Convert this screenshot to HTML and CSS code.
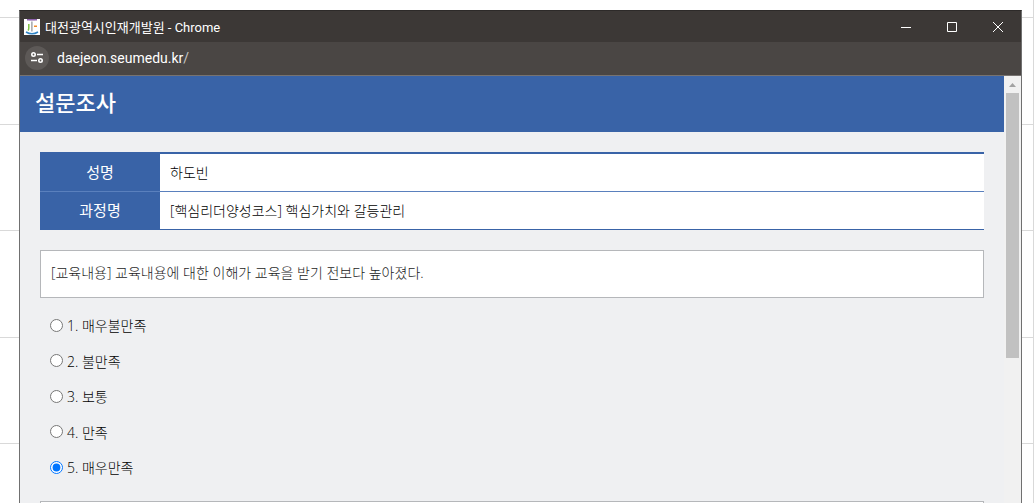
FILE: index.html
```html
<!DOCTYPE html>
<html lang="ko">
<head>
<meta charset="utf-8">
<title>설문조사</title>
<link rel="stylesheet" href="styles.css">
</head>
<body>
<div class="sheet" aria-hidden="true">
  <div class="sheet-top"></div>
  <div class="sheet-row"></div>
  <div class="sheet-row"></div>
  <div class="sheet-row"></div>
  <div class="sheet-row"></div>
  <div class="sheet-row"></div>
</div>
<div class="window">
  <div class="titlebar">
    <svg class="favicon" width="16" height="16" viewBox="0 0 16 16">
      <path fill="#fff" d="M0 0h16v16H0z"/>
      <path fill="#8e63ad" d="M3 0h10v1.5H3z"/>
      <path fill="#b79acb" d="M5 1.5h6V2H5z"/>
      <path fill="#8a8f96" d="M7.3 2.5h1.2v10H7.3z"/>
      <path d="M4.8 5v4q0 1.6-.8 2.5" fill="none" stroke="#7fc241" stroke-width="1.5"/>
      <path fill="#f08a2c" d="M10 6.5h3V8h-3z"/>
      <path d="M2 13q6 3.5 12 0" fill="none" stroke="#2f83c5" stroke-width="1.5"/>
    </svg>
    <span class="window-title">대전광역시인재개발원 - Chrome</span>
    <div class="controls">
      <button type="button" aria-label="최소화"><svg width="12" height="12" viewBox="0 0 12 12"><path d="M1 6.5h10"/></svg></button>
      <button type="button" aria-label="최대화"><svg width="12" height="12" viewBox="0 0 12 12"><path d="M1.5 1.5h9v9h-9z"/></svg></button>
      <button type="button" aria-label="닫기"><svg width="12" height="12" viewBox="0 0 12 12"><path d="M1 1l10 10M11 1L1 11"/></svg></button>
    </div>
  </div>
  <div class="addressbar">
    <button type="button" class="site-info" aria-label="사이트 정보 보기">
      <svg width="14" height="14" viewBox="0 0 14 14"><circle cx="3.5" cy="3.5" r="1.7"/><path d="M7 3.5h6M1 9.5h6"/><circle cx="10.5" cy="9.5" r="1.7"/></svg>
    </button>
    <span class="url">daejeon.seumedu.kr<span class="path">/</span></span>
  </div>
  <div class="viewport">
    <main class="page">
      <h1 class="page-title">설문조사</h1>
      <div class="content">
        <table class="info">
          <tr><th scope="row">성명</th><td>하도빈</td></tr>
          <tr><th scope="row">과정명</th><td>[핵심리더양성코스] 핵심가치와 갈등관리</td></tr>
        </table>
        <p class="question" id="q1">[교육내용] 교육내용에 대한 이해가 교육을 받기 전보다 높아졌다.</p>
        <div class="options" role="radiogroup" aria-labelledby="q1">
          <label class="option"><input type="radio" name="q1" value="1">1. 매우불만족</label>
          <label class="option"><input type="radio" name="q1" value="2">2. 불만족</label>
          <label class="option"><input type="radio" name="q1" value="3">3. 보통</label>
          <label class="option"><input type="radio" name="q1" value="4">4. 만족</label>
          <label class="option"><input type="radio" name="q1" value="5" checked>5. 매우만족</label>
        </div>
        <p class="question"></p>
      </div>
    </main>
    <div class="scrollbar" aria-hidden="true">
      <svg class="arrow" width="17" height="17" viewBox="0 0 17 17"><path d="M5 11l3.5-4 3.5 4z"/></svg>
      <div class="thumb"></div>
    </div>
  </div>
</div>
</body>
</html>
```

FILE: styles.css
```css
* { box-sizing: border-box; }

body {
  margin: 0;
  height: 100vh;
  overflow: hidden;
  display: flex;
  background: #fff;
  font-family: "Open Sans", "Noto Sans CJK KR", sans-serif;
  font-size: 14px;
  color: #000;
}

/* Spreadsheet grid behind the window */
.sheet {
  position: absolute;
  inset: 0;
  overflow: hidden;
  border-right: 1px solid #d9d9d9;
  margin-right: 1px;
}
.sheet-top { height: 18px; border-bottom: 1px solid #d9d9d9; }
.sheet-row { height: 107px; border-bottom: 1px solid #d9d9d9; }
.sheet-row:nth-child(odd) { height: 106px; }

.window {
  position: relative;
  flex: 1;
  display: flex;
  flex-direction: column;
  margin: 10px 13px 0 19px;
  border: 1px solid #707070;
  border-top-color: #2d2a29;
  border-bottom: 0;
}

.titlebar {
  display: flex;
  align-items: center;
  height: 31px;
  padding-left: 4px;
  background: #3c3836;
  color: #fff;
  font-family: Roboto, "Noto Sans CJK KR", sans-serif;
}
.window-title {
  margin-left: 5px;
  font-size: 13px;
}
.controls { display: flex; margin-left: auto; height: 100%; }
.controls button {
  display: flex;
  align-items: center;
  justify-content: center;
  width: 46px;
  padding: 0;
  border: 0;
  background: none;
}
.controls path { fill: none; stroke: #fff; stroke-width: 1; }

.addressbar {
  display: flex;
  align-items: center;
  gap: 8px;
  height: 34px;
  padding: 0 5px 1px;
  background: #4a4644;
  border-bottom: 1px solid #777371;
  color: #fff;
  font-family: Roboto, sans-serif;
}
.site-info {
  display: flex;
  align-items: center;
  justify-content: center;
  width: 24px;
  height: 24px;
  padding: 0;
  border: 0;
  border-radius: 50%;
  background: #5d5957;
}
.site-info svg { fill: none; stroke: #fff; stroke-width: 1.6; }
.url { font-size: 14px; }
.path { color: #c8c6c5; }

.viewport { display: flex; flex: 1; min-height: 0; background: #eff0f2; }
.page { flex: 1; min-width: 0; overflow: hidden; }

.page-title {
  margin: 0;
  padding: 0 15px 4px;
  line-height: 52px;
  background: #3963a7;
  color: #fff;
  font-size: 22px;
  font-weight: 500;
}

.content { padding: 20px; }

.info {
  width: 100%;
  border-collapse: separate;
  border-spacing: 0;
  border-top: 2px solid #3963a7;
}
.info th, .info td {
  height: 38px;
  padding: 0 10px 2px;
  border-bottom: 1px solid #5a80bd;
}
.info tr:last-child th, .info tr:last-child td { border-bottom-color: #3963a7; }
.info th {
  width: 120px;
  background: #3963a7;
  color: #fff;
  font-size: 15px;
  font-weight: 400;
}
.info td {
  background: #fff;
  font-weight: 300;
}

.question {
  min-height: 48px;
  margin: 20px 0 0;
  padding: 0 10px 2px;
  border: 1px solid #b5b7ba;
  background: #fff;
  color: #1c1c1c;
  line-height: 44px;
  font-weight: 300;
}

.options { padding: 9px 0 16px; }
.options + .question { margin-top: 0; }
.option {
  display: flex;
  align-items: center;
  height: 36px;
  padding-left: 10px;
  font-weight: 300;
}
.option:nth-child(even) { height: 35px; }
.option input { width: 13px; height: 13px; margin: 0 4px 0 0; }

.scrollbar { width: 17px; background: #f1f1f1; }
.arrow { display: block; fill: #a3a3a3; }
.thumb { height: 62%; margin: 0 2px; background: #c1c1c1; }
```
